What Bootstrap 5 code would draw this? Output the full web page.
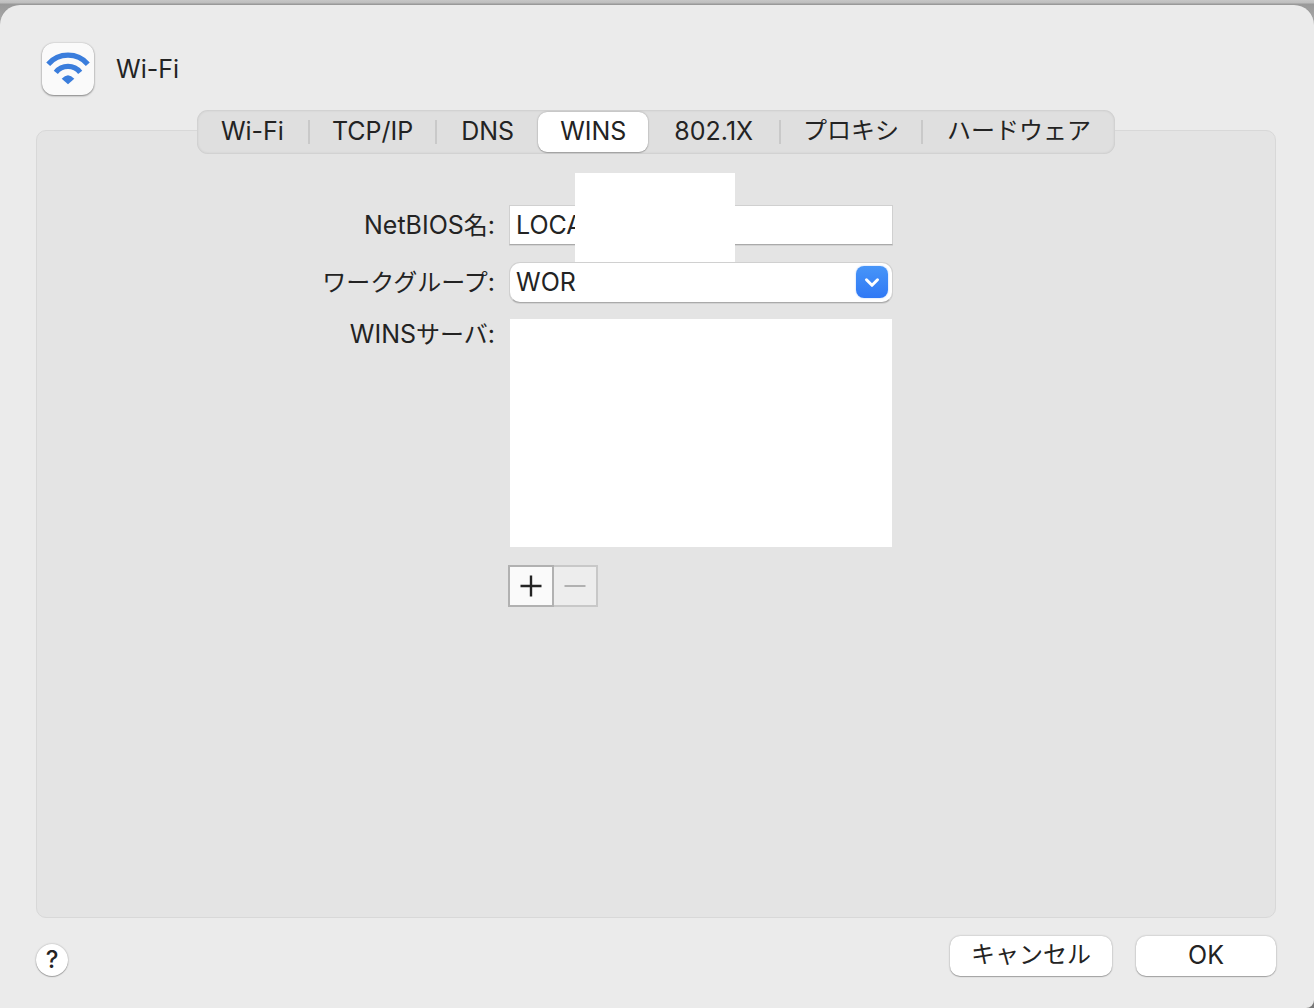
<!DOCTYPE html>
<html lang="ja">
<head>
<meta charset="utf-8">
<meta name="viewport" content="width=device-width, initial-scale=1">
<title>Wi-Fi</title>
<link href="https://cdn.jsdelivr.net/npm/bootstrap@5.3.0/dist/css/bootstrap.min.css" rel="stylesheet">
<style>
  body {
    background: linear-gradient(#c6c6c6, #bdbdbd 3px, #999 4px, #aaa 24px, #777 100%);
    color: #232323;
    font-family: Inter, "Noto Sans CJK JP", sans-serif;
    font-size: 25px;
    line-height: 32px;
  }
  .kana { font-size: 24px; }
  .sheet {
    margin-top: 5px;
    min-height: calc(100vh - 5px);
    padding: 38px 38px 32px 36px;
    background: #ebebeb;
    border-radius: 20px 20px 8px 0;
    box-shadow: 0 -1px 0 #999;
  }
  .sheet-head { padding-left: 6px; gap: 22px; margin-bottom: 15px; }
  .sheet-head h1 { font-size: 25px; line-height: 32px; font-weight: 400; }
  .app-icon {
    width: 52px; height: 52px; border-radius: 12px; background: #fafafa;
    box-shadow: 0 0 2px rgba(0,0,0,.2), 0 1px 2px rgba(0,0,0,.4);
  }
  .tab-strip {
    z-index: 1; height: 44px; margin-bottom: -24px; padding: 2px 0;
    background: #dfdfdf; border-radius: 11px;
    box-shadow: inset 0 0 3px rgba(0,0,0,.16);
  }
  .tab-strip .nav-link {
    height: 40px; padding: 3px 24px 5px; line-height: 32px;
    color: #232323; border-radius: 9px;
  }
  .tab-strip .nav-link.snug { padding-left: 22px; padding-right: 22px; }
  .tab-strip .nav-link.roomy { padding-left: 26px; padding-right: 26px; }
  .tab-strip .nav-link.active {
    color: #232323; background: #fff;
    box-shadow: 0 0 2px rgba(0,0,0,.3), 0 1px 1px rgba(0,0,0,.2);
  }
  .tab-strip .ruled { border-right: 2px solid transparent; border-image: linear-gradient(transparent 8px, #c9c9c9 8px, #c9c9c9 32px, transparent 32px) 0 2 0 0; }
  .pane { background: #e4e4e4; border: 1px solid #d8d8d8; border-radius: 10px; padding-top: 74px; }
  .fields { display: grid; grid-template-columns: 37% 384px; column-gap: 14px; row-gap: 16px; }
  .fields label { text-align: right; line-height: 40px; }
  .fields .form-control {
    height: 40px; padding: 0 6px; font-size: 25px; line-height: 38px; color: #232323; background: #fff;
    border: 1px solid #d0d0d0; border-bottom-color: #aaa; border-radius: 0;
    box-shadow: 0 1px 0 rgba(0,0,0,.08);
  }
  .fields .combo .form-control { height: 41px; border-radius: 11px; padding-right: 44px; padding-bottom: 2px; }
  .combo-btn {
    top: 4px; right: 5px; width: 32px; height: 32px; border-radius: 8px;
    background: linear-gradient(#4795f8, #2f78f5); box-shadow: 0 0 2px rgba(47,120,245,.4);
  }
  .fields .server-list { height: 228px; border: 0; margin: 0 1px; width: 382px; background: #fff; appearance: none; box-shadow: none; }
  .fields .top-label { line-height: 30px; }
  .cover { z-index: 2; top: -32px; left: 66px; width: 160px; height: 89px; background: #fff; }
  .edit-btns { grid-column: 2; margin: 2px 0 0 -1px; }
  .edit-btns button { width: 46px; height: 42px; border: 2px solid #b1b1b1; background: #fafafa; color: #232323; }
  .edit-btns button + button { border-color: #c8c8c8; border-left: 0; background: #ededed; color: #b1b1b1; width: 44px; }
  .foot { margin-top: 18px; gap: 24px; }
  .help-btn, .push-btn {
    background: #fff; color: #232323; border: 0;
    box-shadow: 0 0 2px rgba(0,0,0,.3), 0 1px 1px rgba(0,0,0,.25);
  }
  .help-btn { width: 32px; height: 32px; border-radius: 50%; font-weight: 500; font-size: 24px; line-height: 32px; }
  .push-btn { width: 140px; height: 40px; border-radius: 10px; line-height: 32px; padding: 3px 0 5px; }
  .push-wide { width: 162px; }
</style>
<script src="https://cdn.jsdelivr.net/npm/bootstrap@5.3.0/dist/js/bootstrap.bundle.min.js"></script>
</head>
<body>
<main class="sheet d-flex flex-column">
  <header class="sheet-head d-flex align-items-center">
    <svg class="app-icon" viewBox="0 0 52 52" aria-hidden="true">
      <g fill="none" stroke="#3a7ddc" stroke-width="5.2">
        <path d="M6.200 21.200A26.300 26.300 0 0 1 45.800 21.200"/>
        <path d="M13.800 29.300A15.600 15.600 0 0 1 38.200 29.300"/>
      </g>
      <path d="M19.700 35.800Q26 28.800 32.300 35.800L26 41.300Z" fill="#3a7ddc"/>
    </svg>
    <h1 class="mb-0">Wi-Fi</h1>
  </header>

  <div class="tab-strip nav nav-pills flex-nowrap align-self-center position-relative" role="tablist">
    <button class="nav-link ruled" type="button" role="tab">Wi-Fi</button>
    <button class="nav-link ruled snug" type="button" role="tab">TCP/IP</button>
    <button class="nav-link" type="button" role="tab">DNS</button>
    <button class="nav-link active snug" type="button" role="tab" aria-selected="true">WINS</button>
    <button class="nav-link ruled roomy" type="button" role="tab">802.1X</button>
    <button class="nav-link ruled snug kana" type="button" role="tab">プロキシ</button>
    <button class="nav-link kana" type="button" role="tab">ハードウェア</button>
  </div>

  <section class="pane flex-grow-1" role="tabpanel">
    <form class="fields">
      <label for="netbios">NetBIOS<span class="kana">名</span>:</label>
      <div class="position-relative">
        <input class="form-control" id="netbios" type="text" value="LOCA">
        <div class="cover position-absolute"></div>
      </div>
      <label for="workgroup"><span class="kana">ワークグループ</span>:</label>
      <div class="combo position-relative">
        <input class="form-control" id="workgroup" type="text" value="WOR">
        <button class="combo-btn btn p-0 border-0 position-absolute d-flex" type="button" aria-label="ワークグループを選択">
          <svg width="32" height="32" viewBox="0 0 32 32"><path d="M10.500 13.800L16 19.300L21.500 13.800" fill="none" stroke="#fff" stroke-width="3" stroke-linecap="round" stroke-linejoin="round"/></svg>
        </button>
      </div>
      <label class="top-label" for="servers">WINS<span class="kana">サーバ</span>:</label>
      <select class="form-control server-list" id="servers" multiple></select>
      <div class="edit-btns d-flex">
        <button class="p-0 d-flex align-items-center justify-content-center" type="button" aria-label="追加">
          <svg width="22" height="22" viewBox="0 0 22 22"><path d="M.5 11H21.500M11 .5V21.500" stroke="currentColor" stroke-width="2.400"/></svg>
        </button>
        <button class="p-0 d-flex align-items-center justify-content-center" type="button" aria-label="削除" disabled>
          <svg width="22" height="22" viewBox="0 0 22 22"><path d="M.5 11H21.500" stroke="currentColor" stroke-width="2"/></svg>
        </button>
      </div>
    </form>
  </section>

  <footer class="foot d-flex">
    <button class="help-btn p-0 me-auto align-self-end" type="button">?</button>
    <button class="push-btn push-wide kana" type="button">キャンセル</button>
    <button class="push-btn" type="button">OK</button>
  </footer>
</main>
</body>
</html>
